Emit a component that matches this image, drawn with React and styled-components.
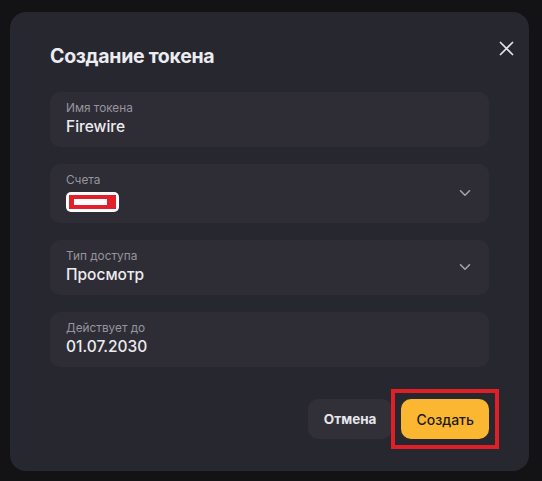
import React from "react";
import styled, { createGlobalStyle } from "styled-components";

const Global = createGlobalStyle`
  html, body {
    margin: 0;
    background: #131316;
    font-family: Inter, "Noto Sans", sans-serif;
  }
  * { box-sizing: border-box; }
`;

const Page = styled.div`
  width: 542px;
  height: 481px;
  padding: 12px 0 0 10px;
  background: #131316;
`;

const Dialog = styled.section`
  position: relative;
  width: 519px;
  height: 459px;
  padding: 30px 40px 31px;
  background: #27272f;
  border-radius: 16px;
  display: flex;
  flex-direction: column;
`;

const Title = styled.h2`
  margin: 0 0 22px;
  height: 28px;
  line-height: 28px;
  font-size: 19.5px;
  font-weight: 700;
  color: #ececf0;
  letter-spacing: -0.3px;
`;

const Close = styled.button`
  position: absolute;
  top: 27px;
  right: 14px;
  width: 18px;
  height: 18px;
  padding: 0;
  border: none;
  background: none;
  display: flex;
  align-items: center;
  justify-content: center;
`;

const Fields = styled.div`
  display: flex;
  flex-direction: column;
  gap: 17px;
`;

const Field = styled.div`
  display: flex;
  align-items: center;
  padding: 8px 18px 9px 16px;
  background: #2e2d35;
  border-radius: 10px;
`;

const FieldBody = styled.div`
  flex: 1;
  display: flex;
  flex-direction: column;
`;

const Label = styled.span`
  font-size: 11.8px;
  line-height: 16px;
  color: #96959e;
`;

const Value = styled.span`
  font-size: 15.5px;
  line-height: 22px;
  font-weight: 500;
  color: #ececf0;
`;

const Redacted = styled.span`
  margin: 4px 0 2px;
  width: 53px;
  height: 20px;
  padding: 3px;
  background: #fff;
  border-radius: 5px;
  display: flex;
`;

const RedactedInner = styled.span`
  flex: 1;
  background: #e3202a;
  display: flex;
  align-items: center;
  justify-content: center;
  padding-right: 4px;
  &::after {
    content: "";
    width: 33px;
    height: 6px;
    background: #fff;
  }
`;

const Actions = styled.div`
  margin-top: 32px;
  display: flex;
  justify-content: flex-end;
  gap: 9px;
`;

const Button = styled.button`
  position: relative;
  height: 40px;
  padding: 0 ${p => (p.$primary ? "15px" : "16px")};
  border: none;
  border-radius: 10px;
  font-family: inherit;
  font-size: ${p => (p.$primary ? "14px" : "13.5px")};
  font-weight: ${p => (p.$primary ? 500 : 700)};
  background: ${p => (p.$primary ? "#fbb731" : "#313039")};
  color: ${p => (p.$primary ? "#1c1a16" : "#e6e6ea")};

  &::after {
    content: "";
    display: ${p => (p.$marked ? "block" : "none")};
    position: absolute;
    inset: -10px;
    border: 4px solid #e01f27;
    pointer-events: none;
  }
`;

const Chevron = () => (
  <svg width="12" height="8" viewBox="0 0 12 8" fill="none">
    <path d="M1.5 1.8 6 6.2 10.5 1.8" stroke="#a4a3ab" strokeWidth="1.6" strokeLinecap="round" strokeLinejoin="round" />
  </svg>
);

function App() {
  return (
    <>
      <Global />
      <Page>
        <Dialog>
          <Close aria-label="Закрыть">
            <svg width="15" height="15" viewBox="0 0 15 15">
              <path d="M1.5 1.5 13.5 13.5 M13.5 1.5 1.5 13.5" stroke="#e4e4e8" strokeWidth="1.7" strokeLinecap="round" />
            </svg>
          </Close>
          <Title>Создание токена</Title>
          <Fields>
            <Field>
              <FieldBody>
                <Label>Имя токена</Label>
                <Value>Firewire</Value>
              </FieldBody>
            </Field>
            <Field>
              <FieldBody>
                <Label>Счета</Label>
                <Redacted><RedactedInner /></Redacted>
              </FieldBody>
              <Chevron />
            </Field>
            <Field>
              <FieldBody>
                <Label>Тип доступа</Label>
                <Value>Просмотр</Value>
              </FieldBody>
              <Chevron />
            </Field>
            <Field>
              <FieldBody>
                <Label>Действует до</Label>
                <Value>01.07.2030</Value>
              </FieldBody>
            </Field>
          </Fields>
          <Actions>
            <Button>Отмена</Button>
            <Button $primary $marked>Создать</Button>
          </Actions>
        </Dialog>
      </Page>
    </>
  );
}

export default App;
